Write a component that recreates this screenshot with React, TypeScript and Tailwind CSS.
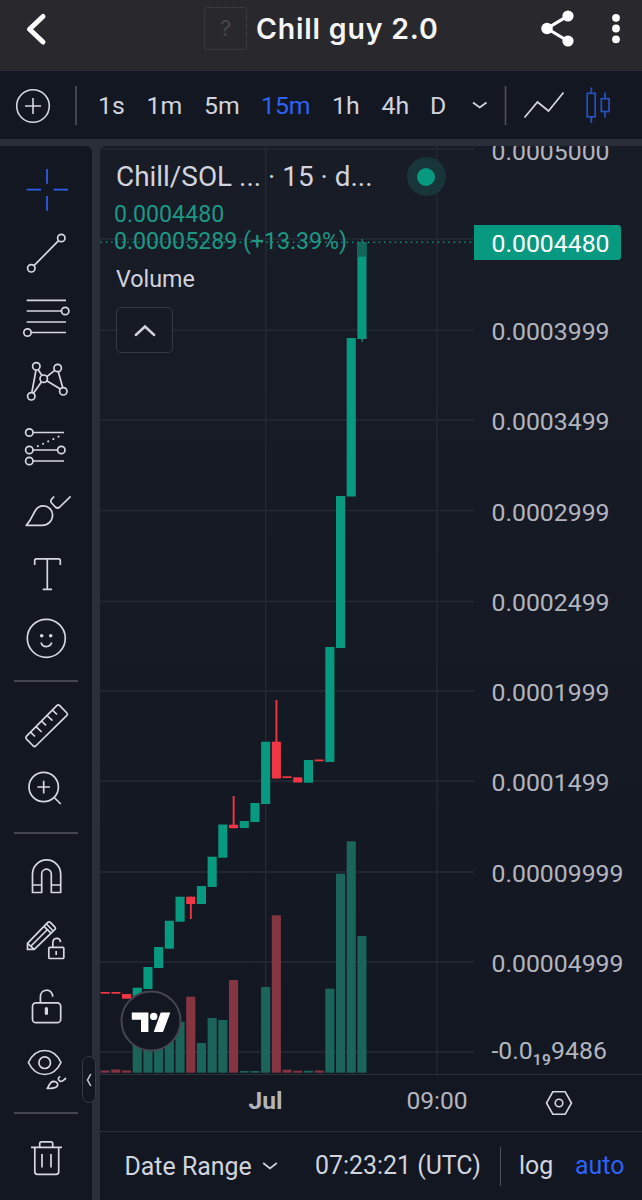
import type { ReactNode } from "react";

const GREEN = "#089981";
const RED = "#f23645";

type Candle = {
  up: boolean;
  top: number;
  bottom: number;
  high?: number;
  low?: number;
  volume: number;
};

const candles: Candle[] = [
  { up: false, top: 992, bottom: 993.7, volume: 1070.5 },
  { up: false, top: 992, bottom: 993.7, volume: 1069.5 },
  { up: false, top: 994, bottom: 998.7, volume: 1070.5 },
  { up: true, top: 987.7, bottom: 1000, volume: 1040 },
  { up: true, top: 967, bottom: 989, volume: 1034 },
  { up: true, top: 947, bottom: 968, volume: 1034 },
  { up: true, top: 920.7, bottom: 948.7, volume: 1030 },
  { up: true, top: 896.7, bottom: 921.7, volume: 1021.7 },
  { up: false, top: 896.7, bottom: 904, low: 919, volume: 996.7 },
  { up: true, top: 886, bottom: 904, volume: 1043 },
  { up: true, top: 856.7, bottom: 887, volume: 1018 },
  { up: true, top: 824.5, bottom: 857.7, volume: 1020 },
  { up: false, top: 824.7, bottom: 828.2, high: 796, volume: 980 },
  { up: true, top: 821, bottom: 828, volume: 1071 },
  { up: true, top: 803, bottom: 822, volume: 1071 },
  { up: true, top: 741.7, bottom: 804, volume: 987 },
  { up: false, top: 741.7, bottom: 778.5, high: 700, volume: 915.3 },
  { up: false, top: 776.3, bottom: 778, volume: 1069.7 },
  { up: false, top: 777.3, bottom: 782.5, volume: 1070.7 },
  { up: true, top: 760, bottom: 782.7, volume: 1070.7 },
  { up: false, top: 759.5, bottom: 761.3, volume: 1070.5 },
  { up: true, top: 647, bottom: 762, volume: 988.7 },
  { up: true, top: 496, bottom: 648, volume: 873.7 },
  { up: true, top: 338, bottom: 496.5, volume: 841.3 },
  { up: true, top: 242, bottom: 339, high: 239, low: 342, volume: 936 },
];

const gridRows = [149, 239, 330, 420, 510.5, 601.5, 691, 781, 872, 962, 1052];

const priceLabels = [
  "0.0005000",
  "",
  "0.0003999",
  "0.0003499",
  "0.0002999",
  "0.0002499",
  "0.0001999",
  "0.0001499",
  "0.00009999",
  "0.00004999",
];

function Tool({ children, active }: { children: ReactNode; active?: boolean }) {
  return (
    <svg
      width="92"
      height="64"
      viewBox="0 0 92 64"
      fill="none"
      stroke={active ? "#2f5ff0" : "#d5d8e0"}
      strokeWidth="1.7"
      strokeLinejoin="round"
      className="block shrink-0"
    >
      {children}
    </svg>
  );
}

function Divider() {
  return (
    <div className="flex h-6 shrink-0 items-center px-3.5">
      <div className="h-[1.5px] w-full bg-[#434651]" />
    </div>
  );
}

function Header() {
  return (
    <header className="flex h-[71px] shrink-0 items-center bg-[#29292d] pb-[14px]">
      <svg width="60" height="57" viewBox="0 0 60 57" fill="none" stroke="#fff" strokeWidth="5" strokeLinecap="round" strokeLinejoin="round">
        <path d="M43 16.5 L29.5 29.3 L43 42" />
      </svg>
      <div className="ml-[144px] flex h-[43px] w-[43px] items-center justify-center rounded-[4px] border-[1.5px] border-dotted border-[#4a4a4e] pb-px font-[Inter] text-[22px] text-[#47474b]">
        ?
      </div>
      <h1 className="ml-[9px] mt-[2px] w-[279px] whitespace-nowrap font-[Inter,sans-serif] text-[28.5px] font-semibold tracking-[0.8px] text-[#f5f5f6]">
        Chill guy 2.0
      </h1>
      <svg width="107" height="57" viewBox="535 0 107 57" fill="#fff">
        <path d="M568 15.8 L547 28.5 L568 41" fill="none" stroke="#fff" strokeWidth="3.2" />
        <circle cx="568" cy="16" r="5.6" />
        <circle cx="547" cy="28.5" r="5.8" />
        <circle cx="568" cy="41" r="5.6" />
        <circle cx="616" cy="17.8" r="3.9" />
        <circle cx="616" cy="28.5" r="3.9" />
        <circle cx="616" cy="39.3" r="3.9" />
      </svg>
    </header>
  );
}

function IntervalBar() {
  return (
    <nav className="flex h-[68px] shrink-0 items-center bg-[#131722] text-[24.8px] text-[#d1d4dc]">
      <svg width="98" height="68" viewBox="0 0 98 68" fill="none" stroke="#d5d8e0" strokeWidth="1.6" className="shrink-0">
        <circle cx="33" cy="35" r="16.3" />
        <path d="M25 35 H41 M33 27 V43" />
        <path d="M76 15 V54" stroke="#50535e" />
      </svg>
      <span className="mt-0.5 w-[48.5px] shrink-0">1s</span>
      <span className="mt-0.5 w-[57.5px] shrink-0">1m</span>
      <span className="mt-0.5 w-[57px] shrink-0">5m</span>
      <span className="mt-0.5 w-[71px] shrink-0 text-[#2f62f5]">15m</span>
      <span className="mt-0.5 w-[49.5px] shrink-0">1h</span>
      <span className="mt-0.5 w-[48.5px] shrink-0">4h</span>
      <span className="mt-0.5 w-[30px] shrink-0">D</span>
      <svg width="182" height="68" viewBox="460 0 182 68" fill="none" stroke="#d5d8e0" strokeWidth="1.7" className="shrink-0">
        <path d="M473 31.5 L479.7 36.5 L486.5 31.5" />
        <path d="M505.5 15 V54" stroke="#50535e" strokeWidth="1.5" />
        <path d="M524.5 46.5 L537.5 31 L548.5 40 L563.5 21.5" />
        <g stroke="#2750c4">
          <path d="M591.3 16.5 V22 M591.3 46 V52 M605 21.5 V27.5 M605 40.5 V46.5" />
          <rect x="587.2" y="22.3" width="8" height="23.5" />
          <rect x="601.3" y="27.7" width="7.8" height="12.8" />
        </g>
      </svg>
    </nav>
  );
}

function DrawingTools() {
  return (
    <aside className="relative flex w-[92px] shrink-0 flex-col rounded-tr-md bg-[#131722] pt-[11px]">
      {/* Crosshair */}
      <Tool active>
        <path d="M47 12 V26.7 M47 39 V53.7 M26.7 32.7 H41 M53.7 32.7 H68" />
      </Tool>
      {/* Trend line */}
      <Tool>
        <circle cx="31.3" cy="47.3" r="3.7" />
        <circle cx="61.3" cy="17" r="3.7" />
        <path d="M34 44.6 L58.6 19.7" />
      </Tool>
      {/* Fib retracement */}
      <Tool>
        <path d="M26.7 15.3 H66 M26.7 26 H61.3 M26.7 37 H66 M31.3 47.5 H66" />
        <circle cx="65.2" cy="26" r="3.7" />
        <circle cx="27.5" cy="47.5" r="3.7" />
      </Tool>
      {/* XABCD pattern */}
      <Tool>
        <path d="M38 20.6 L42 26.5 M36 21 L31.8 43.6 M33.4 44.3 L41.6 32.7 M46.9 27.7 L54.7 21.3 M58.3 22.7 L62.7 38.6 M46.7 31.8 L60.3 40" />
        <circle cx="36.3" cy="17.3" r="3.7" />
        <circle cx="57.7" cy="19" r="3.7" />
        <circle cx="43.7" cy="29.7" r="3.7" />
        <circle cx="31.3" cy="47.3" r="3.7" />
        <circle cx="63.3" cy="42.3" r="3.7" />
      </Tool>
      {/* Long position */}
      <Tool>
        <circle cx="29.3" cy="19.5" r="3.7" />
        <circle cx="29.3" cy="37" r="3.7" />
        <circle cx="61.3" cy="37" r="3.7" />
        <circle cx="29.3" cy="48" r="3.7" />
        <path d="M33 19.5 H64 M33 37 H57.5 M33 48 H64" />
        <path d="M37.8 33.2 L61.5 22.3" strokeWidth="2" strokeLinecap="round" strokeDasharray="0.1 5.6" />
      </Tool>
      {/* Brush */}
      <Tool>
        <path d="M26.3 48.4 C31 43 32.5 39 34.5 35 C36.5 31 40 28.9 43.3 28.9 C48.5 28.9 52.6 33 52.6 38 C52.6 44 48 48.4 42 48.4 Z" />
        <path d="M54.3 19.5 L51.6 22.2 Q50 24 51.6 26 L55.3 30 Q57.5 32 59.8 30 L70.6 19.3" />
      </Tool>
      {/* Text */}
      <Tool>
        <path d="M34.7 24 V19.5 Q34.7 17.8 36.4 17.8 H58.6 Q60.3 17.8 60.3 19.5 V24 M47.3 17.8 V48.4 M42.7 48.4 H52" />
      </Tool>
      {/* Emoji */}
      <Tool>
        <circle cx="46.3" cy="33.3" r="19" />
        <path d="M41 37.6 C42.5 43 50 43 51.7 37.6" />
        <circle cx="41.7" cy="30.7" r="1.8" fill="#d5d8e0" stroke="none" />
        <circle cx="50.7" cy="30.7" r="1.8" fill="#d5d8e0" stroke="none" />
      </Tool>
      <Divider />
      {/* Ruler */}
      <Tool>
        <path d="M26.3 43.4 L57 12.4 Q58.3 11.3 59.5 12.4 L66.9 20 Q68 21.2 66.9 22.4 L35.7 53 Q34.5 54 33.3 53 L26.3 45.8 Q25.2 44.6 26.3 43.4 Z" />
        <path d="M30.5 39.2 L35 43.5 M36 33.7 L41.7 39 M41.5 28 L46 32.3 M47 22.5 L52.5 27.7 M52.5 17.2 L57 21.5" />
      </Tool>
      {/* Zoom in */}
      <Tool>
        <circle cx="43.7" cy="30" r="14.7" />
        <path d="M54.2 40.5 L60.8 47 M37.3 30 H50 M43.7 23.7 V36.4" />
      </Tool>
      <Divider />
      {/* Magnet */}
      <Tool>
        <path d="M32.5 47.5 V29 A14.1 14.1 0 0 1 60.7 29 V47.5 H51.3 V29 A4.8 4.8 0 0 0 41.7 29 V47.5 Z M32.5 40 H41.7 M51.3 40 H60.7" />
      </Tool>
      {/* Lock drawing mode */}
      <Tool>
        <path d="M27.5 40.4 V34.4 L47.8 13.4 Q49 12.2 50.3 13.4 L55 18.2 Q56 19.3 55 20.4 L34.3 40.4 Z" />
        <path d="M27.5 34.4 L34.3 40.4 M44 17.4 L51 24.2 M46.5 15 L53.2 22 M31 37 L47.5 20.5" />
        <rect x="48.8" y="38.3" width="15" height="11.2" rx="1" />
        <path d="M52.8 38.3 V34 C52.8 28 60.5 27.8 60.5 33.3 M56.2 42 V46" />
      </Tool>
      {/* Lock all */}
      <Tool>
        <rect x="32.5" y="29.8" width="28.2" height="19.9" rx="3.5" />
        <path d="M40.4 29.8 V24 C40.4 15 52.7 15 52.7 23.8" />
        <path d="M46.4 35.5 V40.5" strokeWidth="3.2" strokeLinecap="round" />
      </Tool>
      {/* Hide drawings */}
      <Tool>
        <path d="M28.4 25.5 C36 9.5 53.5 9.5 61 25.5 C53.5 41.5 36 41.5 28.4 25.5 Z" />
        <circle cx="44.7" cy="25.7" r="5.8" />
        <path d="M47.2 51.5 C49.5 49 49.3 44.5 53.5 44.3 C57 44.3 58.5 47 57.3 49 C56 51.3 53 51.5 47.2 51.5 Z M60.3 39.5 C57.5 40.5 58 43 60 44.2 C62.5 45.3 63.5 43 66 41" />
      </Tool>
      <Divider />
      {/* Remove */}
      <div className="pt-px">
        <Tool>
          <path d="M31 21.3 H62 M39.7 21.3 V17.5 Q39.7 15.8 41.4 15.8 H51 Q52.7 15.8 52.7 17.5 V21.3 M34.8 21.3 V45.8 Q34.8 48.4 37.4 48.4 H56.1 Q58.7 48.4 58.7 45.8 V21.3 M42 28 V41.5 M51 28 V41.5" />
        </Tool>
      </div>

      {/* Collapse handle */}
      <div className="absolute left-[82px] top-[910px] z-10 flex h-[47px] w-[14px] items-center justify-center rounded-[7px] border border-[#363a45] bg-[#131722]">
        <svg width="6" height="14" viewBox="0 0 6 14" fill="none" stroke="#d1d4dc" strokeWidth="1.5">
          <path d="M4.8 1 L1.5 7 L4.8 13" />
        </svg>
      </div>
    </aside>
  );
}

function Chart() {
  return (
    <div className="relative h-[928px] w-[374px] shrink-0">
      <svg width="374" height="928" viewBox="100 146 374 928" className="block">
        <g stroke="#262a35" strokeWidth="1.3">
          {gridRows.map((y) => (
            <line key={y} x1="100" x2="474" y1={y} y2={y} />
          ))}
          <line x1="265.7" x2="265.7" y1="146" y2="1074" />
          <line x1="437" x2="437" y1="146" y2="1074" />
        </g>
        {candles.map((c, i) => {
          const x = 100.6 + i * 10.7;
          return (
            <g key={i}>
              <rect x={x} y={c.volume} width="9.1" height={1072.7 - c.volume} fill={c.up ? "#1b645a" : "#843541"} />
              {(c.high || c.low) && (
                <rect
                  x={x + 3.7}
                  y={c.high ?? c.top}
                  width="1.9"
                  height={(c.low ?? c.bottom) - (c.high ?? c.top)}
                  fill={c.up ? "#1b645a" : RED}
                />
              )}
              <rect x={x} y={c.top} width="9.1" height={c.bottom - c.top} fill={c.up ? GREEN : RED} />
            </g>
          );
        })}
        {/* Unfilled part of the live candle */}
        <rect x="357.4" y="242" width="9.1" height="14.7" fill="#126659" />
        <line x1="100.5" x2="474" y1="242.3" y2="242.3" stroke={GREEN} strokeWidth="1.4" strokeDasharray="1.4 3.95" />
      </svg>

      <div className="absolute left-4 top-[11px] whitespace-nowrap">
        <div className="flex items-center">
          <span className="w-[290.5px] text-[27.9px] leading-8 text-[#d1d4dc]">Chill/SOL ... · 15 · d...</span>
          <span className="flex h-[39px] w-[39px] items-center justify-center rounded-full bg-[#18353a]">
            <span className="h-[18px] w-[18px] rounded-full bg-[#089981]" />
          </span>
        </div>
        <div className="-ml-0.5 mt-[5px] text-[23.15px] leading-[27px] text-[#1e9784]">
          <p>0.0004480</p>
          <p>0.00005289 (+13.39%)</p>
        </div>
        <p className="mt-[10px] text-[23.3px] leading-7 text-[#d1d4dc]">Volume</p>
        <div className="mt-[14px] flex h-[46px] w-[57px] items-center justify-center rounded-[5px] border-[1.5px] border-[#363a45] bg-[#161a25]">
          <svg width="22" height="13" viewBox="0 0 22 13" fill="none" stroke="#d1d4dc" strokeWidth="2.4" strokeLinecap="round">
            <path d="M1.8 11 L11 2.5 L20.2 11" />
          </svg>
        </div>
      </div>

      <svg width="62" height="62" viewBox="0 0 62 62" className="absolute left-[20px] top-[844px]">
        <circle cx="31" cy="31" r="29.5" fill="#131722" stroke="#454750" strokeWidth="2" />
        <g fill="#fff">
          <path d="M11.8 22.6 H28.4 V42 H21 V29.7 H11.8 Z M40.7 22.6 H50.3 L43 42 H33.7 Z" />
          <circle cx="33.7" cy="26.4" r="3.7" />
        </g>
      </svg>
    </div>
  );
}

function PriceAxis() {
  return (
    <div className="relative h-[928px] w-[168px] overflow-hidden text-[24.8px] text-[#b2b5be]">
      <div className="-mt-[40px] flex flex-col pl-[17.5px]">
        {priceLabels.map((label, i) => (
          <div key={i} className="flex h-[90.25px] items-center">
            {label}
          </div>
        ))}
        <div className="flex h-[85px] items-center">
          <span className="whitespace-nowrap">
            -0.0<span className="relative top-[6px] text-[15.5px] font-semibold tracking-[0.3px]">19</span>9486
          </span>
        </div>
      </div>
      <div className="absolute left-0 top-[79px] flex h-[35px] w-[147px] items-center rounded-r-[3px] bg-[#089981] pl-[17.5px] pt-[3px] text-white">
        0.0004480
      </div>
    </div>
  );
}

function TimeAxis() {
  return (
    <div className="flex h-[57px] shrink-0 items-center border-t-[1.5px] border-[#2a2e39] text-[24.6px] text-[#b2b5be]">
      <span className="mb-[3px] w-[331px] text-center font-bold">Jul</span>
      <span className="-ml-[29px] mb-[3px] w-[70px] text-center">09:00</span>
      <svg width="28" height="26" viewBox="0 0 28 26" fill="none" stroke="#d5d8e0" strokeWidth="1.6" className="ml-[73px]">
        <path d="M7.8 1.8 H20.2 L26.5 13 L20.2 24.2 H7.8 L1.5 13 Z" />
        <circle cx="14" cy="13" r="3.8" />
      </svg>
    </div>
  );
}

function BottomBar() {
  return (
    <footer className="flex h-[69px] items-center border-t-[1.5px] border-[#2a2e39] text-[24.9px] text-[#d1d4dc]">
      <span className="ml-[24.5px] mt-px w-[137.5px] shrink-0 whitespace-nowrap">Date Range</span>
      <svg width="16" height="10" viewBox="0 0 16 10" fill="none" stroke="#d1d4dc" strokeWidth="1.7" className="shrink-0">
        <path d="M1.2 2 L8 7.3 L14.8 2" />
      </svg>
      <span className="ml-[37px] w-[184.5px] shrink-0 whitespace-nowrap">07:23:21 (UTC)</span>
      <span className="h-[39px] w-[1.5px] shrink-0 bg-[#50535e]" />
      <span className="ml-[18px] w-[56px] shrink-0">log</span>
      <span className="text-[#2f62f5]">auto</span>
    </footer>
  );
}

export default function App() {
  return (
    <div className="flex h-[1200px] w-[642px] flex-col overflow-hidden bg-[#2a2e39] font-[Roboto,sans-serif]">
      <Header />
      <IntervalBar />
      <div className="mt-[7px] flex h-[1054px] gap-2">
        <DrawingTools />
        <main className="flex w-[542px] flex-col overflow-hidden rounded-tl-md bg-[#131722]">
          <div className="flex h-[928px] shrink-0 bg-linear-to-b from-[#181c27] to-[#131722]">
            <Chart />
            <PriceAxis />
          </div>
          <TimeAxis />
          <BottomBar />
        </main>
      </div>
    </div>
  );
}
